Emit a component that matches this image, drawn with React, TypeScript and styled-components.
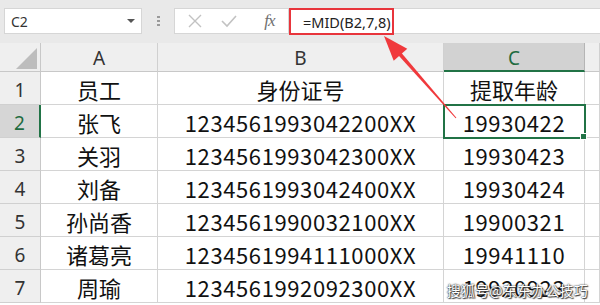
import React from "react";
import styled, { createGlobalStyle } from "styled-components";

const Global = createGlobalStyle`
  html, body { margin: 0; padding: 0; background: #ffffff; }
  body { width: 600px; height: 305px; overflow: hidden; font-family: "Noto Sans", "Noto Sans CJK SC", sans-serif; }
  #root { width: 600px; height: 305px; }
`;

const Page = styled.div`
  position: relative;
  width: 600px;
  height: 305px;
  overflow: hidden;
  background: #ffffff;
`;

const FormulaBar = styled.div`
  display: flex;
  align-items: flex-start;
  height: 43px;
  padding: 8px 0 0 4px;
  box-sizing: border-box;
  background: #e9e9e9;
`;

const NameBox = styled.div`
  display: flex;
  align-items: center;
  justify-content: space-between;
  width: 138px;
  height: 26px;
  box-sizing: border-box;
  padding: 0 6px 0 6px;
  background: #ffffff;
  border: 1px solid #d6d6d6;
  font-family: "Noto Sans", sans-serif;
  font-size: 14px;
  color: #333;
`;

const Caret = styled.span`
  width: 0;
  height: 0;
  border-left: 4px solid transparent;
  border-right: 4px solid transparent;
  border-top: 4px solid #555;
`;

const Grip = styled.div`
  display: flex;
  flex-direction: column;
  gap: 2px;
  width: 32px;
  align-items: center;
  padding-top: 8px;
  span {
    width: 3px;
    height: 2px;
    background: #9a9a9a;
  }
`;

const Controls = styled.div`
  display: flex;
  align-items: center;
  justify-content: space-around;
  width: 114px;
  height: 26px;
  box-sizing: border-box;
  padding: 0 4px;
  background: #ffffff;
  border: 1px solid #d6d6d6;
  border-right: none;
`;

const Fx = styled.span`
  font-family: "Liberation Serif", serif;
  font-style: italic;
  font-size: 17px;
  color: #707070;
  letter-spacing: -1px;
  margin-left: 8px;
`;

const FormulaInput = styled.div`
  flex: 1;
  display: flex;
  height: 26px;
  box-sizing: border-box;
  background: #ffffff;
  border: 1px solid #d6d6d6;
  border-right: none;
`;

const Highlight = styled.div`
  display: flex;
  align-items: center;
  width: 105px;
  height: 27px;
  margin: -1px 0 0 0;
  box-sizing: border-box;
  padding-left: 12px;
  border: 2px solid #e8353c;
  font-family: "Noto Sans", sans-serif;
  font-size: 14.5px;
  color: #222;
  white-space: nowrap;
`;

const Sheet = styled.div`
  display: grid;
  grid-template-columns: 41px 117px 286px 141px 1fr;
  grid-template-rows: 29px repeat(7, 33px);
`;

const Corner = styled.div`
  position: relative;
  background: #efefef;
  border-right: 1px solid #c8c8c8;
  border-bottom: 1px solid #c8c8c8;
  box-sizing: border-box;
  display: flex;
  align-items: flex-end;
  justify-content: flex-end;
  padding: 0 3px 2px 0;
  svg { display: block; }
`;

const ColHead = styled.div<{ $active?: boolean }>`
  display: flex;
  align-items: center;
  justify-content: center;
  box-sizing: border-box;
  background: ${(p) => (p.$active ? "#d2d2d2" : "#efefef")};
  border-right: 1px solid ${(p) => (p.$active ? "#b5b5b5" : "#d0d0d0")};
  border-bottom: ${(p) => (p.$active ? "2px solid #217346" : "1px solid #c8c8c8")};
  color: ${(p) => (p.$active ? "#1e6b40" : "#333")};
  font-family: "Noto Sans", sans-serif;
  font-size: 19px;
  padding-top: 2px;
`;

const RowHead = styled.div<{ $active?: boolean }>`
  display: flex;
  align-items: center;
  justify-content: center;
  box-sizing: border-box;
  background: ${(p) => (p.$active ? "#d6d6d6" : "#efefef")};
  border-right: ${(p) => (p.$active ? "2px solid #217346" : "1px solid #c8c8c8")};
  border-bottom: 1px solid #d0d0d0;
  color: ${(p) => (p.$active ? "#1e6b40" : "#333")};
  font-family: "Noto Sans", sans-serif;
  font-size: 19px;
  padding-top: 3px;
`;

const Cell = styled.div<{ $selected?: boolean; $spaced?: boolean }>`
  position: relative;
  display: flex;
  align-items: center;
  justify-content: center;
  box-sizing: border-box;
  border-right: 1px solid #d4d4d4;
  border-bottom: 1px solid #d4d4d4;
  font-family: "Noto Sans CJK SC", "Noto Sans", sans-serif;
  font-size: 22px;
  color: #111;
  white-space: nowrap;
  padding-top: 1px;
  letter-spacing: ${(p) => (p.$spaced ? "0.6px" : "0")};
  ${(p) =>
    p.$selected
      ? `outline: 2px solid #217346; outline-offset: -1px; z-index: 1;`
      : ""}
`;

const FillHandle = styled.span`
  position: absolute;
  right: -3px;
  bottom: -3px;
  width: 5px;
  height: 5px;
  background: #217346;
  border: 1px solid #ffffff;
`;

const Overlay = styled.svg`
  position: absolute;
  left: 0;
  top: 0;
  pointer-events: none;
  z-index: 5;
`;

const Watermark = styled.div`
  position: absolute;
  right: 12px;
  bottom: 5px;
  z-index: 6;
  font-family: "Noto Sans CJK SC", sans-serif;
  font-size: 14px;
  color: #ffffff;
  text-shadow: 0 0 2px #333, 0 0 1px #333, 1px 1px 1px #444;
  letter-spacing: 0.2px;
`;

const rows: [string, string, string][] = [
  ["员工", "身份证号", "提取年龄"],
  ["张飞", "1234561993042200XX", "19930422"],
  ["关羽", "1234561993042300XX", "19930423"],
  ["刘备", "1234561993042400XX", "19930424"],
  ["孙尚香", "1234561990032100XX", "19900321"],
  ["诸葛亮", "1234561994111000XX", "19941110"],
  ["周瑜", "1234561992092300XX", "19920923"],
];

function arrow() {
  const tip = { x: 384, y: 36 };
  const tail = { x: 456, y: 118 };
  const dx = tip.x - tail.x;
  const dy = tip.y - tail.y;
  const len = Math.hypot(dx, dy);
  const ux = dx / len;
  const uy = dy / len;
  const nx = -uy;
  const ny = ux;
  const headLen = 25;
  const headW = 9;
  const bx = tip.x - headLen * ux;
  const by = tip.y - headLen * uy;
  const head = `${tip.x},${tip.y} ${bx + headW * nx},${by + headW * ny} ${bx - headW * nx},${by - headW * ny}`;
  const w1 = 2;
  const w2 = 0.5;
  const sx = bx + 2 * ux;
  const sy = by + 2 * uy;
  const shaft = `${sx + w1 * nx},${sy + w1 * ny} ${tail.x + w2 * nx},${tail.y + w2 * ny} ${tail.x - w2 * nx},${tail.y - w2 * ny} ${sx - w1 * nx},${sy - w1 * ny}`;
  return { head, shaft };
}

export default function App() {
  const a = arrow();
  return (
    <Page>
      <Global />
      <FormulaBar>
        <NameBox>
          <span>C2</span>
          <Caret />
        </NameBox>
        <Grip>
          <span />
          <span />
          <span />
        </Grip>
        <Controls>
          <svg width="14" height="14" viewBox="0 0 14 14">
            <path d="M1 1 L13 13 M13 1 L1 13" stroke="#c2c2c2" strokeWidth="1.4" fill="none" />
          </svg>
          <svg width="16" height="14" viewBox="0 0 16 14">
            <path d="M1 7 L6 12 L15 2" stroke="#c2c2c2" strokeWidth="1.6" fill="none" />
          </svg>
          <Fx>fx</Fx>
        </Controls>
        <FormulaInput>
          <Highlight>=MID(B2,7,8)</Highlight>
        </FormulaInput>
      </FormulaBar>
      <Sheet>
        <Corner>
          <svg width="21" height="21" viewBox="0 0 21 21">
            <polygon points="21,0 21,21 0,21" fill="#bdbdbd" />
          </svg>
        </Corner>
        <ColHead>A</ColHead>
        <ColHead>B</ColHead>
        <ColHead $active>C</ColHead>
        <ColHead />
        {rows.map((r, i) => (
          <React.Fragment key={i}>
            <RowHead $active={i === 1}>{i + 1}</RowHead>
            <Cell>{r[0]}</Cell>
            <Cell $spaced={i > 0}>{r[1]}</Cell>
            <Cell $selected={i === 1} $spaced={i > 0}>
              {r[2]}
              {i === 1 && <FillHandle />}
            </Cell>
            <Cell />
          </React.Fragment>
        ))}
      </Sheet>
      <Overlay width="600" height="305" viewBox="0 0 600 305">
        <polygon points={a.shaft} fill="#f0393c" />
        <polygon points={a.head} fill="#f0393c" />
      </Overlay>
      <Watermark>搜狐号@东东办公技巧</Watermark>
    </Page>
  );
}
